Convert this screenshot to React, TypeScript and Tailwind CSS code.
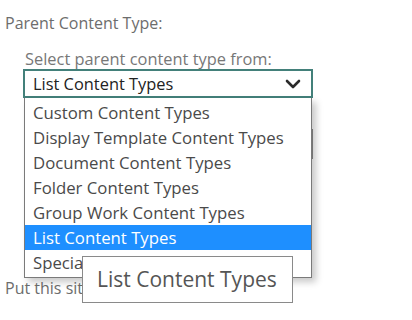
import React from "react";

const items = [
  "Custom Content Types",
  "Display Template Content Types",
  "Document Content Types",
  "Folder Content Types",
  "Group Work Content Types",
  "List Content Types",
  "Special Content Types",
];

export default function App() {
  const selected = "List Content Types";

  return (
    <div className="relative w-[412px] h-[320px] overflow-hidden bg-white font-['Open_Sans','Noto_Sans',sans-serif]">
      <div className="pl-[5px] pt-[13px]">
        <p className="text-[16px] leading-[20px] text-[#6d6d6d]">Parent Content Type:</p>

        <div className="ml-[18px] mt-[16px] w-[290px]">
          <p className="pl-[2px] text-[16.4px] leading-[20px] text-[#777]">Select parent content type from:</p>

          {/* select box */}
          <div className="flex h-[29px] items-center justify-between border-2 border-[#43807a] pl-[8px] pr-[9px]">
            <span className="text-[16.4px] leading-[20px] text-[#222]">{selected}</span>
            <svg width="16" height="10" viewBox="0 0 16 10" className="mr-[1px]">
              <path d="M2 2 L8 8 L14 2" fill="none" stroke="#2b2b2b" strokeWidth="2.6" strokeLinecap="round" strokeLinejoin="round" />
            </svg>
          </div>

          {/* second field behind the list */}
          <div className="mt-[31px] ml-[1px] h-[30px] w-[289px] border-2 border-[#8e8e8e]" />
        </div>

        <p className="mt-[119px] text-[16px] leading-[20px] text-[#6d6d6d]">Put this site content type into:</p>
      </div>

      {/* open dropdown list */}
      <div className="absolute left-[24px] top-[98px] w-[288px] border border-[#7a7a7a] border-t-0 bg-white pt-[2px] pb-[2px] shadow-[4px_4px_7px_rgba(0,0,0,0.22)]">
        {items.map((it) => (
          <div
            key={it}
            className={
              it === selected
                ? "flex h-[25px] items-center bg-[#1e8fff] pl-[8px] text-[16.75px] text-white"
                : "flex h-[25px] items-center pl-[8px] text-[16.75px] text-[#4a4a4a]"
            }
          >
            {it}
          </div>
        ))}
      </div>

      {/* tooltip */}
      <div className="absolute left-[82px] top-[256px] flex h-[47px] w-[211px] items-center border border-[#8a8a8a] bg-white pl-[14px] text-[21px] text-[#555]">
        List Content Types
      </div>
    </div>
  );
}
